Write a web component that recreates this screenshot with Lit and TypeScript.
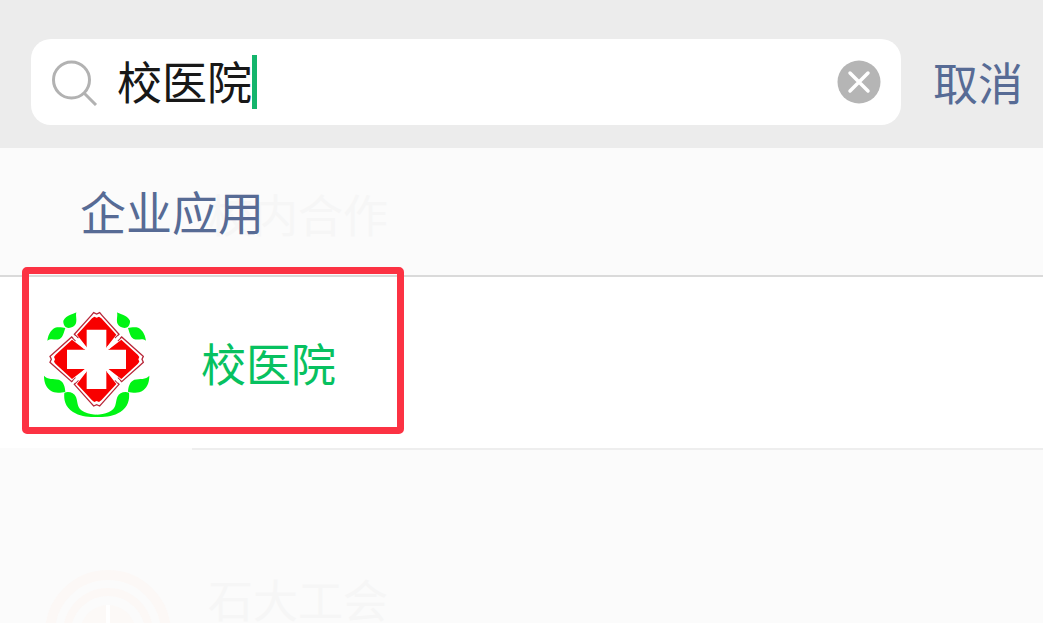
import { LitElement, html, svg, css } from "lit";
import { customElement, state } from "lit/decorators.js";

@customElement("hospital-logo")
class HospitalLogo extends LitElement {
  static styles = css`
    :host { display: block; }
    .logo { display: block; width: 108px; height: 112px; }
  `;

  render() {
    const petal = (angle: number) => svg`
      <g transform="rotate(${angle} 245 301)">
        <path d="M190 238 L178 226 L229 169 L236 161 L245 165 L254 161 L261 169 L312 226 L300 238" fill="none" stroke="#b8283a" stroke-width="4"/>
        <path d="M186 227 L231 178 L238 173 L245 176 L252 173 L259 178 L304 227 L276 263 L276 270 L214 270 L214 263Z" fill="#f80000"/>
      </g>`;
    const leaves = svg`
      <path d="M184 160 C181 164 153 168 145 185 C144 195 150 203 153 205 C165 210 178 203 182 195 C187 183 181 171 184 160Z"/>
      <path d="M97 245 C100 225 110 208 126 205 C136 204 145 206 151 207 C147 218 145 234 134 240 C120 245 109 236 97 245Z"/>
      <path d="M87 350 C97 362 116 359 132 362 C146 368 150 383 151 398 C138 401 121 405 105 394 C91 382 87 367 87 350Z"/>
      <path d="M148 401 C163 396 177 402 183 414 C190 433 184 448 208 459 C221 465 234 466 246 467 L246 474 C220 475 195 472 174 459 C150 443 146 422 148 401Z"/>`;
    return html`
      <svg class="logo" viewBox="81 144 324 336" role="img" aria-label="校医院">
        <g fill="#00f414">
          ${leaves}
          <g transform="translate(490 0) scale(-1 1)">${leaves}</g>
        </g>
        ${[0, 90, 180, 270].map(petal)}
        <path d="M178 234L312 368M312 234L178 368" stroke="#fff" stroke-width="9"/>
        <path d="M215 212H274V272H333V330H274V390H215V330H156V272H215Z" fill="#fff"/>
      </svg>`;
  }
}

@customElement("app-root")
class AppRoot extends LitElement {
  @state() private query = "校医院";

  static styles = css`
    :host {
      display: block;
      min-height: 100vh;
      background: #fbfbfb;
      font-family: "Noto Sans CJK SC", sans-serif;
      font-size: 45px;
      line-height: 60px;
      color: #181818;
    }
    * { box-sizing: border-box; }
    button, input {
      font: inherit;
      border: 0;
      padding: 0;
      margin: 0;
      background: none;
      outline: none;
    }
    .header {
      display: flex;
      align-items: center;
      gap: 32px;
      padding: 39px 20px 23px 31px;
      background: #ececec;
    }
    .search {
      flex: 1;
      min-width: 0;
      display: flex;
      align-items: center;
      height: 86px;
      padding: 0 20px;
      border-radius: 20px;
      background: #fff;
    }
    .search-icon { flex: none; width: 48px; height: 48px; margin-right: 18px; }
    .query { height: 64px; padding-bottom: 4px; color: #181818; caret-color: #10b86c; }
    .caret { flex: none; width: 5px; height: 54px; background: #14b56c; }
    .clear { margin-left: auto; width: 44px; height: 44px; }
    .clear svg { display: block; }
    .cancel { flex: none; color: #576b95; }
    .section {
      position: relative;
      padding: 32px 80px 31px;
      border-bottom: 2px solid #dadada;
    }
    .title {
      position: relative;
      margin: 0;
      padding-bottom: 4px;
      font-size: 46px;
      font-weight: 400;
      color: #576b95;
    }
    .faded { color: #f6f6f6; }
    .behind { position: absolute; left: 208px; top: 36px; }
    .result {
      position: relative;
      display: flex;
      align-items: center;
      gap: 51px;
      height: 171px;
      padding: 0 42px;
      background: #fff;
      color: #07c160;
      text-decoration: none;
    }
    .marker {
      position: absolute;
      left: 22px;
      top: -10px;
      width: 382px;
      height: 167px;
      border: 7px solid #fc3243;
      border-radius: 5px;
      pointer-events: none;
    }
    .divider { height: 2px; margin-left: 192px; background: #eeeeee; }
    .next { display: flex; gap: 36px; height: 173px; padding: 119px 44px 0; overflow: hidden; }
    .seal { flex: none; width: 128px; height: 128px; }
  `;

  private onInput(e: Event) {
    this.query = (e.target as HTMLInputElement).value;
  }

  render() {
    return html`
      <header class="header">
        <div class="search">
          <svg class="search-icon" viewBox="0 0 48 48" fill="none" stroke="#b2b2b2" stroke-width="3" aria-hidden="true">
            <circle cx="20.5" cy="22" r="18"/>
            <path d="M33 35L45 47"/>
          </svg>
          <input class="query" type="text" aria-label="搜索" .value=${this.query}
            style="width:${this.query.length}em" @input=${this.onInput}>
          <span class="caret"></span>
          <button class="clear" aria-label="清除" @click=${() => (this.query = "")}>
            <svg width="44" height="44" viewBox="0 0 44 44" aria-hidden="true">
              <circle cx="22" cy="22" r="21.5" fill="#b5b5b5"/>
              <path d="M13 13L31 31M31 13L13 31" stroke="#fff" stroke-width="3.5" stroke-linecap="round"/>
            </svg>
          </button>
        </div>
        <button class="cancel">取消</button>
      </header>
      <main>
        <div class="section">
          <span class="faded behind" aria-hidden="true">校内合作</span>
          <h2 class="title">企业应用</h2>
        </div>
        <a class="result" href="#">
          <hospital-logo></hospital-logo>
          <span>校医院</span>
          <span class="marker"></span>
        </a>
        <div class="divider"></div>
        <div class="next" aria-hidden="true">
          <svg class="seal" viewBox="0 0 128 128" fill="none" stroke="#fcf8f6">
            <circle cx="64" cy="64" r="58" stroke-width="10"/>
            <circle cx="64" cy="64" r="41" stroke-width="8"/>
            <circle cx="64" cy="64" r="28" fill="#fcf9f7" stroke="none"/>
            <path d="M64 36V92" stroke="#fff" stroke-width="4"/>
          </svg>
          <span class="faded">石大工会</span>
        </div>
      </main>`;
  }
}
